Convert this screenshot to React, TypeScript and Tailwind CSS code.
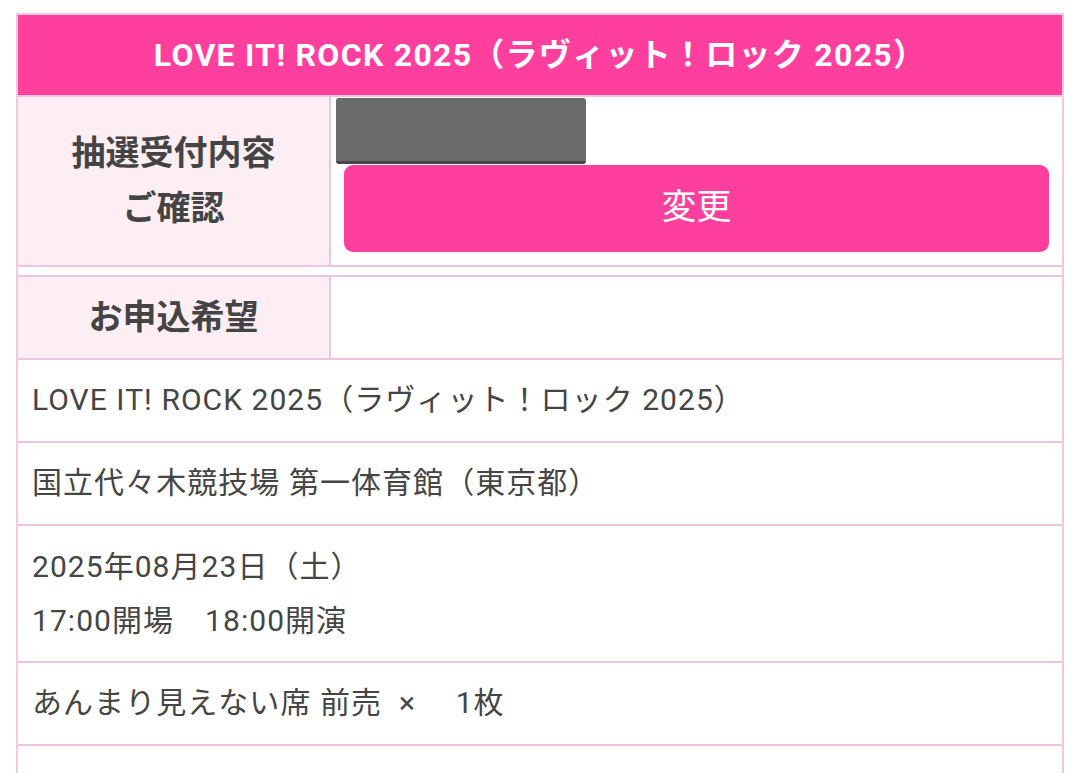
import React from 'react';

const font = { fontFamily: "Roboto, 'Noto Sans CJK JP', sans-serif" };

const InfoRow: React.FC<{ children: React.ReactNode; tall?: boolean }> = ({ children, tall }) => (
  <div
    className={`flex flex-col justify-center px-[14px] border-b-2 border-[#ebc5df] text-[30px] tracking-[0.035em] text-[#454545] ${
      tall ? 'h-[137px] leading-[54px]' : 'h-[83px] pb-[2px]'
    }`}
  >
    {children}
  </div>
);

export default function App() {
  return (
    <div className="min-h-[773px] bg-white pt-[13px] pl-[16px]" style={font}>
      <div className="w-[1048px] border-x-2 border-t-2 border-[#f2c9e4]">
        <div className="h-[80px] bg-[#ff3f9d] flex items-center justify-center text-white font-bold text-[32px] tracking-[0.04em]">
          LOVE IT! ROCK 2025（ラヴィット！ロック 2025）
        </div>

        <div className="flex h-[172px] border-y-2 border-[#ebc5df]">
          <div className="w-[313px] shrink-0 bg-[#fdeef4] border-r-2 border-[#ebc5df] flex flex-col items-center justify-center font-bold text-[34px] leading-[55px] text-[#444]">
            <span>抽選受付内容</span>
            <span>ご確認</span>
          </div>
          <div className="flex-1 flex flex-col pt-[1px]">
            <div className="ml-[5px] w-[250px] h-[66px] bg-[#6b6b6b] border-b-[3px] border-[#474747] rounded-[3px]" />
            <button className="mx-[13px] mt-[1px] h-[87px] rounded-[9px] bg-[#ff3f9d] text-white text-[35px]">
              変更
            </button>
          </div>
        </div>

        <div className="h-[8px]" />

        <div className="flex h-[85px] border-y-2 border-[#ebc5df]">
          <div className="w-[313px] shrink-0 bg-[#fdeef4] border-r-2 border-[#ebc5df] flex items-center justify-center font-bold text-[34px] text-[#444]">
            お申込希望
          </div>
          <div className="flex-1" />
        </div>

        <InfoRow>LOVE IT! ROCK 2025（ラヴィット！ロック 2025）</InfoRow>
        <InfoRow>国立代々木競技場 第一体育館（東京都）</InfoRow>
        <InfoRow tall>
          <span>2025年08月23日（土）</span>
          <span>17:00開場　18:00開演</span>
        </InfoRow>
        <InfoRow>あんまり見えない席 前売&nbsp;&nbsp;×&nbsp;　1枚</InfoRow>
        <div className="h-[40px]" />
      </div>
    </div>
  );
}
